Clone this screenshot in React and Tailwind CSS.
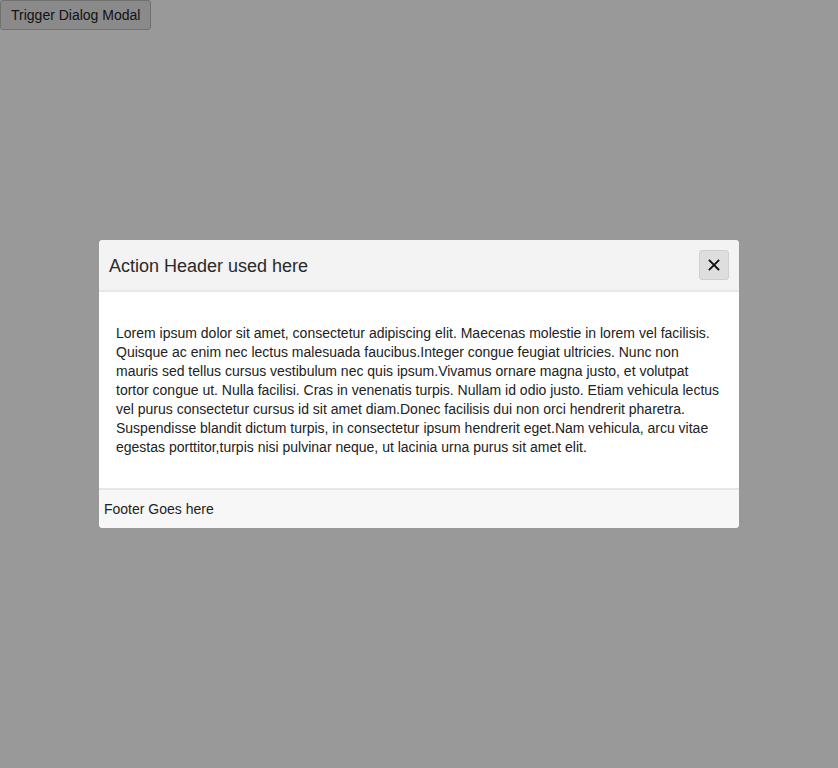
export default function App() {
  return (
    <div className="relative min-h-screen bg-white" style={{ fontFamily: '"Liberation Sans", Arial, sans-serif' }}>
      <button className="h-[30px] px-[10px] text-[14px] text-[#222] bg-[#e6e6e6] border border-[#bbb] rounded-[3px]">
        Trigger Dialog Modal
      </button>
      <div className="fixed inset-0 bg-black/40 flex items-center justify-center">
        <div className="w-[640px] bg-white rounded-[4px] overflow-hidden">
          <div className="h-[52px] bg-[#f3f3f3] border-b-2 border-[#e6e6e6] flex items-center justify-between pl-[10px] pr-[10px]">
            <span className="text-[18px] text-[#2a2a2a] mt-[2px]">Action Header used here</span>
            <button className="w-[30px] h-[30px] bg-[#dedede] border border-[#cfcfcf] rounded-[3px] flex items-center justify-center">
              <svg width="12" height="12" viewBox="0 0 12 12" stroke="#111" strokeWidth="1.8" strokeLinecap="square">
                <path d="M1.5 1.5 L10.5 10.5 M10.5 1.5 L1.5 10.5" />
              </svg>
            </button>
          </div>
          <div className="px-[17px] pt-[32px] pb-[31px] text-[14px] leading-[19px] text-[#222]">
            Lorem ipsum dolor sit amet, consectetur adipiscing elit. Maecenas molestie in lorem vel facilisis. Quisque ac enim nec lectus malesuada faucibus.Integer congue feugiat ultricies. Nunc non mauris sed tellus cursus vestibulum nec quis ipsum.Vivamus ornare magna justo, et volutpat tortor congue ut. Nulla facilisi. Cras in venenatis turpis. Nullam id odio justo. Etiam vehicula lectus vel purus consectetur cursus id sit amet diam.Donec facilisis dui non orci hendrerit pharetra. Suspendisse blandit dictum turpis, in consectetur ipsum hendrerit eget.Nam vehicula, arcu vitae egestas porttitor,turpis nisi pulvinar neque, ut lacinia urna purus sit amet elit.
          </div>
          <div className="h-[40px] bg-[#f7f7f7] border-t-2 border-[#e6e6e6] flex items-center pl-[5px] text-[14px] text-[#222]">
            Footer Goes here
          </div>
        </div>
      </div>
    </div>
  );
}
